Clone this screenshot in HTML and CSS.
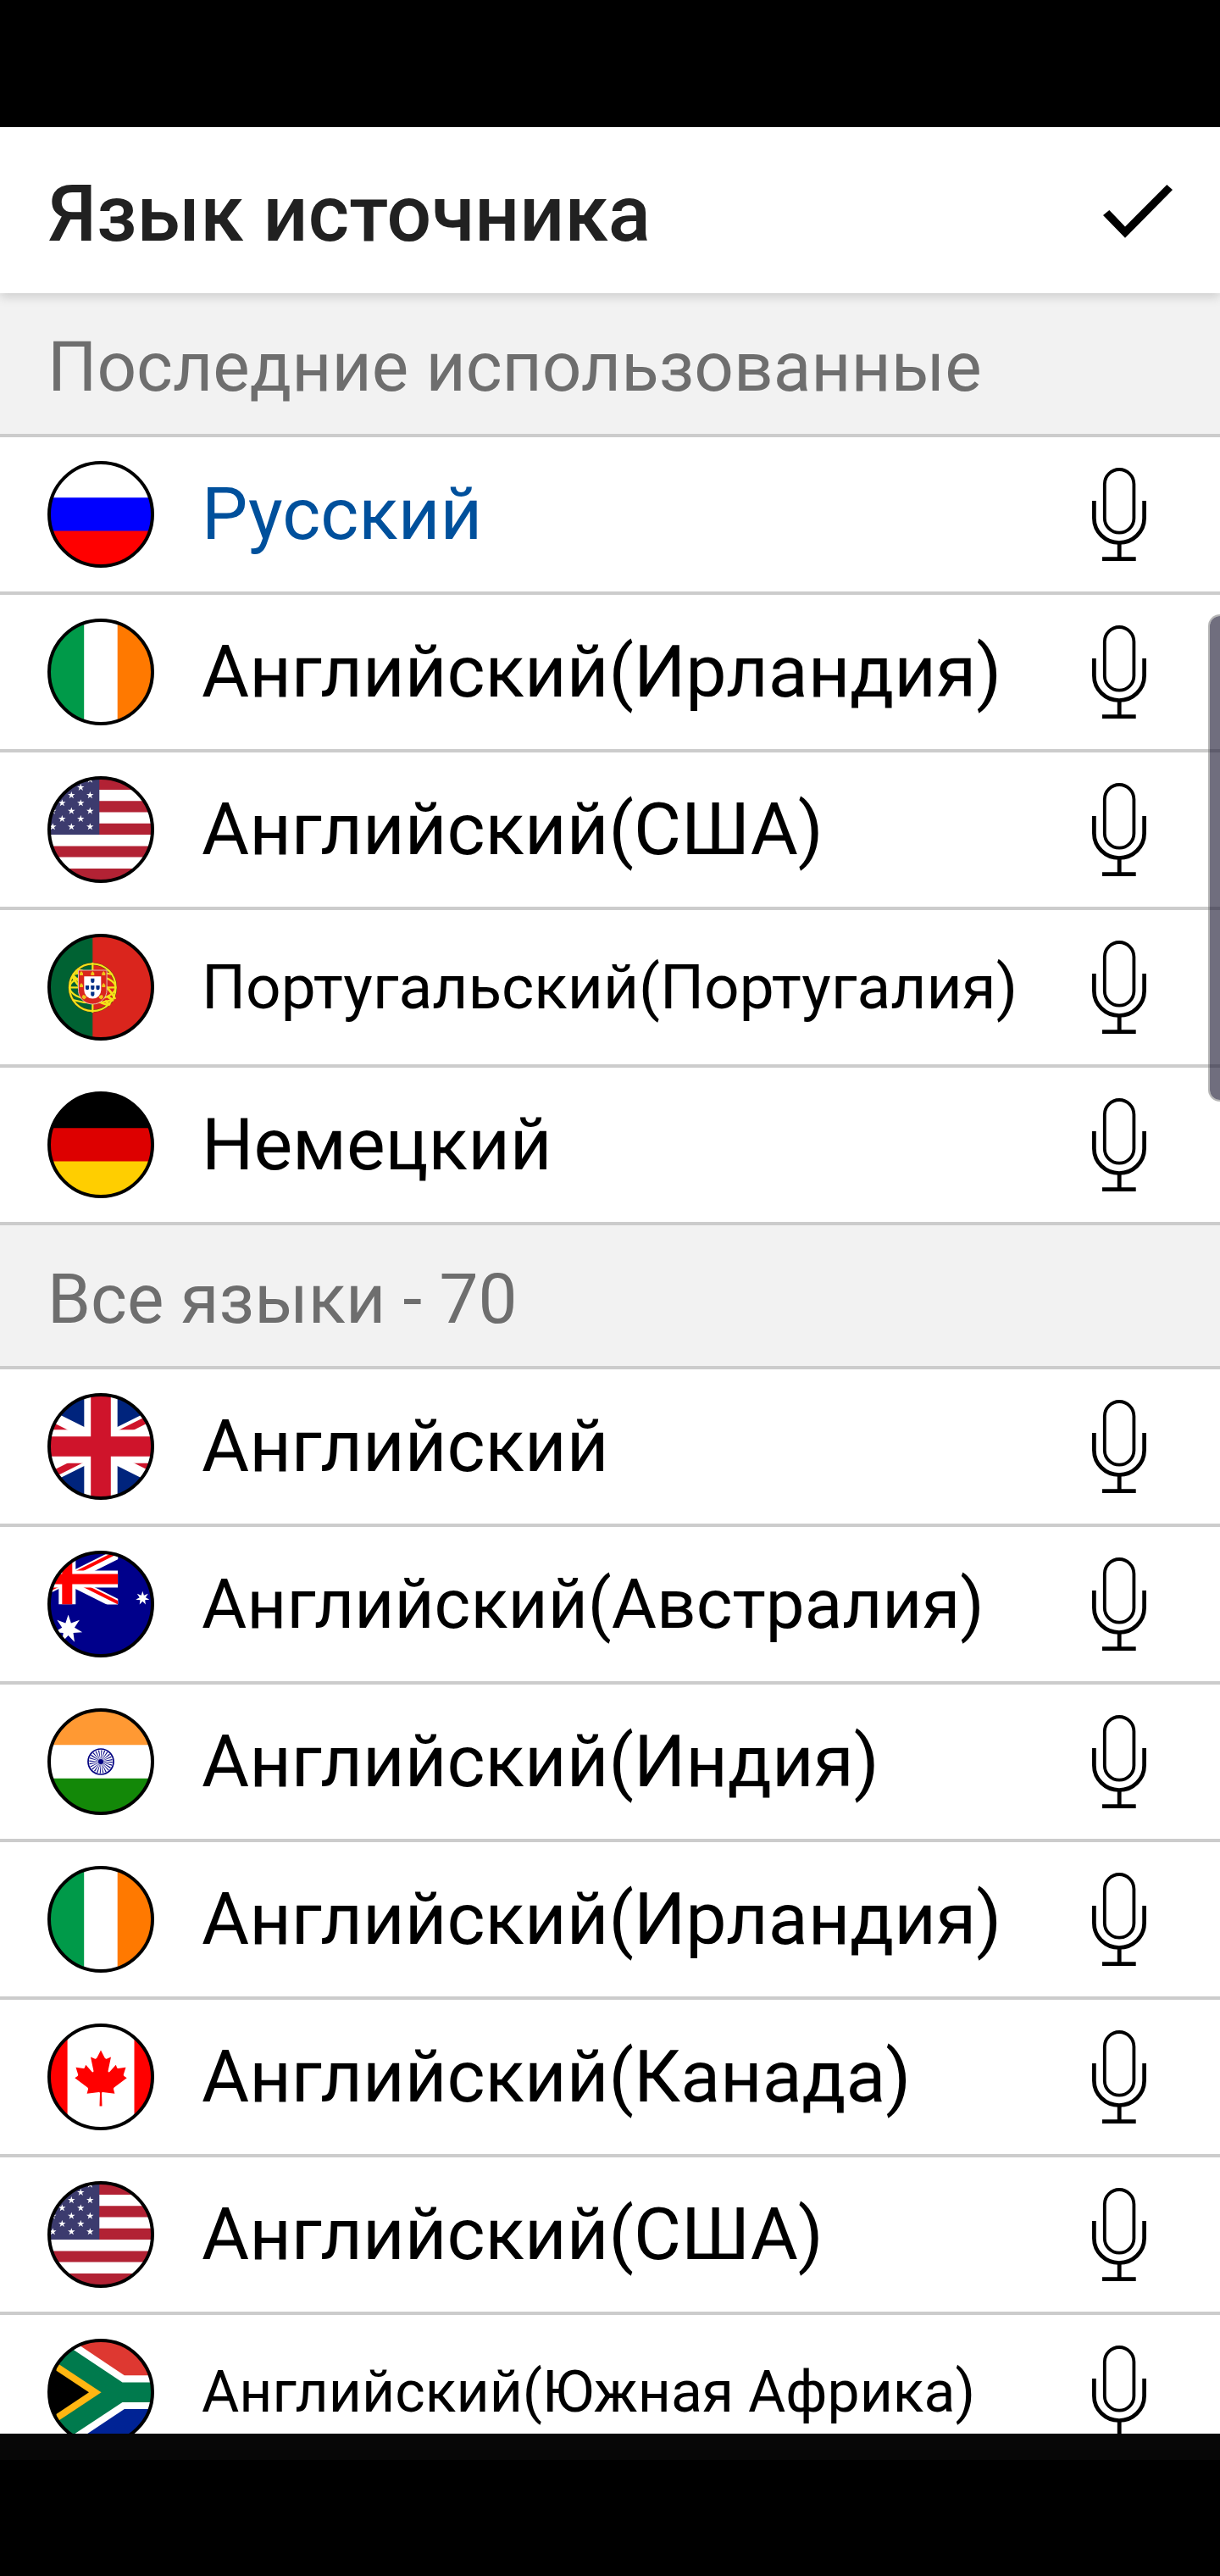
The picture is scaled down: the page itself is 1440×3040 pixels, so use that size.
FILE: index.html
```html
<!DOCTYPE html>
<html lang="ru">
<head>
<meta charset="utf-8">
<title>Язык источника</title>
<link rel="stylesheet" href="styles.css">
</head>
<body>
<svg class="defs" aria-hidden="true">
  <defs>
    <clipPath id="disc"><circle cx="63" cy="63" r="61.5"/></clipPath>
    <clipPath id="union-area"><path d="M0 0h60v30H0z"/></clipPath>
    <clipPath id="union-pinwheel"><path d="M30 15h30v15zv15H0zH0V0zV0h30z"/></clipPath>
    <clipPath id="canton"><path d="M0 0h61.3v69H0z"/></clipPath>

    <symbol id="mic" viewBox="0 0 64 110">
      <g fill="none" stroke="#000">
        <rect x="14.8" y="2" width="34.6" height="74.7" rx="17.3" stroke-width="3.8"/>
        <path d="M2.4 39v20.500a29.600 29 0 0 0 59.200 0V39" stroke-width="4.700"/>
        <path d="M32.200 88v18" stroke-width="4.800"/>
        <path d="M12 107.600h39.700" stroke-width="4.800"/>
      </g>
    </symbol>

    <symbol id="ring" viewBox="0 0 126 126">
      <circle cx="63" cy="63" r="61" fill="none" stroke="#000" stroke-width="4"/>
    </symbol>

    <symbol id="star" viewBox="-10 -10 20 20">
      <path fill="#fff" d="M0-10 2.250-3.090 9.510-3.090 3.630 1.180 5.880 8.090 0 3.820-5.880 8.090-3.630 1.180-9.510-3.090-2.250-3.090z"/>
    </symbol>
    <symbol id="star7" viewBox="-10 -10 20 20">
      <path fill="#fff" d="M0-10 1.930-4 7.820-6.230 4.330-.99 9.750 2.220 3.470 2.770 4.340 9.010 0 4.440-4.340 9.010-3.470 2.770-9.750 2.220-4.330-.99-7.820-6.230-1.930-4z"/>
    </symbol>

    <symbol id="ru" viewBox="0 0 126 126">
      <g clip-path="url(#disc)"><path fill="#fff" d="M0 0h126v44H0z"/><path fill="#00f" d="M0 43.300h126v40H0z"/><path fill="#f00" d="M0 82.500h126V126H0z"/></g>
    </symbol>
    <symbol id="ie" viewBox="0 0 126 126">
      <g clip-path="url(#disc)"><path fill="#fff" d="M0 0h126v126H0z"/><path fill="#009a49" d="M0 0h43.200v126H0z"/><path fill="#ff7900" d="M82.700 0H126v126H82.700z"/></g>
    </symbol>
    <symbol id="de" viewBox="0 0 126 126">
      <g clip-path="url(#disc)"><path d="M0 0h126v44H0z"/><path fill="#d00" d="M0 43.300h126v40H0z"/><path fill="#ffce00" d="M0 82.500h126V126H0z"/></g>
    </symbol>
    <symbol id="us" viewBox="0 0 126 126">
      <g clip-path="url(#disc)">
        <path fill="#fff" d="M0 0h126v126H0z"/>
        <path fill="#b22234" d="M0 2h126v14H0zM0 29.300h126v13.200H0zM0 55.800h126V69H0zM0 82.400h126v13.200H0zM0 109h126v14H0z"/>
        <path fill="#3c3b6e" d="M0 0h61.300v69H0z"/>
        <g clip-path="url(#canton)">
          <use href="#star" x="45.800" y="-.5" width="9" height="9"/>
          <use href="#star" x="34.800" y="8.800" width="9" height="9"/>
          <use href="#star" x="23.800" y="18" width="9" height="9"/><use href="#star" x="45.800" y="18" width="9" height="9"/>
          <use href="#star" x="12.800" y="27.200" width="9" height="9"/><use href="#star" x="34.800" y="27.200" width="9" height="9"/>
          <use href="#star" x="1.800" y="36.600" width="9" height="9"/><use href="#star" x="23.800" y="36.600" width="9" height="9"/><use href="#star" x="45.800" y="36.600" width="9" height="9"/>
          <use href="#star" x="12.800" y="45.900" width="9" height="9"/><use href="#star" x="34.800" y="45.900" width="9" height="9"/>
          <use href="#star" x="1.800" y="55.200" width="9" height="9"/><use href="#star" x="23.800" y="55.200" width="9" height="9"/><use href="#star" x="45.800" y="55.200" width="9" height="9"/>
        </g>
      </g>
    </symbol>
    <symbol id="pt" viewBox="0 0 126 126">
      <g clip-path="url(#disc)">
        <path fill="#da251d" d="M0 0h126v126H0z"/><path fill="#006233" d="M0 0h53.300v126H0z"/>
        <ellipse cx="53.300" cy="63.300" rx="27.300" ry="27.800" fill="none" stroke="#5b4a10" stroke-width="3.200"/>
        <g fill="none" stroke="#f5e21a" stroke-width="2.200">
          <ellipse cx="53.300" cy="63.300" rx="27.300" ry="27.800"/>
          <path d="M53.300 34v59M26 63.300h55M30 48q23-6 47 0M30 78q23 7 47 0"/>
          <path d="M29 50c8 14 26 30 42 34M35 42c14 2 38 20 45 35" stroke-width="2.600"/>
          <path d="M30 49l8 8M34 44l8 8M68 79l6 5M71 74l7 5" stroke-width="3"/>
          <ellipse cx="53.300" cy="63.300" rx="27" ry="14"/>
        </g>
        <path fill="#da251d" stroke="#e3b9b4" stroke-width="1" d="M36.500 43h33.600v23.500a16.800 16.500 0 0 1-33.600 0z"/>
        <path fill="#fff" d="M43.300 50.300h20v16.300a10 10 0 0 1-20 0z"/>
        <path fill="#003087" d="M51.200 52.700h4.200v3.200a2.100 2 0 0 1-4.200 0zM44.900 61h4.200v3.200a2.100 2 0 0 1-4.200 0zM51.200 61h4.200v3.200a2.100 2 0 0 1-4.200 0zM57.400 61h4.200v3.200a2.100 2 0 0 1-4.200 0zM51.200 68.600h4.200v3.200a2.100 2 0 0 1-4.200 0z"/>
        <path fill="#f0c419" d="M38 49v-2.500l2-2.500 2 2.500V49zM51.300 49v-2.500l2-2.500 2 2.500V49zM64.300 49v-2.500l2-2.500 2 2.500V49zM38 63v-2.500l2-2.500 2 2.500V63zM64.300 63v-2.500l2-2.500 2 2.500V63zM43 77.500l-2.500-2.500 1.500-3 3 1 1 2.500zM63.600 77.500l2.500-2.500-1.500-3-3 1-1 2.500z"/>
      </g>
    </symbol>
    <symbol id="union" viewBox="0 0 60 30">
      <g clip-path="url(#union-area)">
        <path stroke="#fff" stroke-width="6" d="M0 0l60 30M60 0L0 30"/>
        <path clip-path="url(#union-pinwheel)" stroke="currentColor" stroke-width="4" d="M0 0l60 30M60 0L0 30"/>
        <path stroke="#fff" stroke-width="10" d="M30 0v30M0 15h60"/>
        <path stroke="currentColor" stroke-width="6" d="M30 0v30M0 15h60"/>
      </g>
    </symbol>
    <symbol id="gb" viewBox="0 0 126 126">
      <g clip-path="url(#disc)"><path fill="#00247d" d="M0 0h126v126H0z"/><use href="#union" x="-55" y="4" width="236" height="118" color="#cf142b"/></g>
    </symbol>
    <symbol id="au" viewBox="0 0 126 126">
      <g clip-path="url(#disc)"><path fill="#00008b" d="M0 0h126v126H0z"/>
        <use href="#union" x="-36.700" y="3.500" width="120" height="60" color="#f00"/>
        <use href="#star7" x="7.600" y="75.400" width="34" height="34"/>
        <use href="#star7" x="104" y="47.700" width="16.600" height="16.600"/>
      </g>
    </symbol>
    <symbol id="in" viewBox="0 0 126 126">
      <g clip-path="url(#disc)"><path fill="#fff" d="M0 0h126v126H0z"/><path fill="#f93" d="M0 0h126v43.300H0z"/><path fill="#138808" d="M0 82.800h126V126H0z"/></g>
      <g fill="none" stroke="#000080">
        <circle cx="63" cy="63" r="15" stroke-width="1.700"/>
        <circle cx="63" cy="63" r="7.200" stroke-width="13" stroke-dasharray=".65 1.235"/>
      </g>
      <circle cx="63" cy="63" r="3" fill="#000080"/>
    </symbol>
    <symbol id="ca" viewBox="0 0 126 126">
      <g clip-path="url(#disc)"><path fill="#fff" d="M0 0h126v126H0z"/><path fill="#f00" d="M0 0h23.600v126H0zM102.500 0H126v126h-23.500z"/></g>
      <path fill="#f00" d="M63 31.400l-4.600 9.200q-1 1.700-2.800.9L51 39.600l3.400 16.200q.3 2.600-1.800 1.200L45.200 48.800l-1.200 3.300q-.4 1-1.500.9l-9-1.300 2.600 8.300q.5 1.300-.5 1.900l-3.300 2.300 15 11.300q1 .9.700 2l-1.400 5.200 14.200-1.700q1.200 0 1.200 1.300l-.5 15.300h3l-.5-15.300q0-1.300 1.200-1.300l14.200 1.700-1.400-5.200q-.3-1.100.7-2l15-11.300-3.300-2.300q-1-.6-.5-1.900l2.600-8.300-9 1.300q-1.100.1-1.500-.9l-1.200-3.300-7.400 8.200q-2.100 1.400-1.800-1.200L75 39.600l-4.600 1.900q-1.800.8-2.800-.9z"/>
    </symbol>
    <symbol id="za" viewBox="0 0 126 126">
      <g clip-path="url(#disc)">
        <path fill="#007a4d" d="M0 0h126v126H0z"/>
        <path fill="#fff" d="M126 51.500H88.500L11.200 0H126zM126 75H88.500L11.200 126H126z"/>
        <path fill="#de3831" d="M126 43.300H90.800L26.200 0H126z"/>
        <path fill="#002395" d="M126 83H90.800L26.200 126H126z"/>
        <path fill="#ffb612" d="M0 21.200l63.600 42.100L0 105.400z"/>
        <path d="M0 4h7.500v26H10.500v66H0zM0 30.700l49 32.600L0 96z"/>
      </g>
    </symbol>
  </defs>
</svg>

<div class="status-bar"></div>
<div class="app">
  <header class="header">
    <h1 class="title">Язык источника</h1>
    <svg class="check" viewBox="0 0 84 64"><path d="M9.300 29.900 2 36l26 26.800L84 6.100 77.300 0 28 49.400z"/></svg>
  </header>
  <main class="list">
    <h2 class="section">Последние использованные</h2>
    <div class="row selected"><svg class="flag"><use href="#ru"/><use href="#ring"/></svg><span class="name">Русский</span><svg class="mic"><use href="#mic"/></svg></div>
    <div class="row"><svg class="flag"><use href="#ie"/><use href="#ring"/></svg><span class="name">Английский(Ирландия)</span><svg class="mic"><use href="#mic"/></svg></div>
    <div class="row"><svg class="flag"><use href="#us"/><use href="#ring"/></svg><span class="name">Английский(США)</span><svg class="mic"><use href="#mic"/></svg></div>
    <div class="row"><svg class="flag"><use href="#pt"/><use href="#ring"/></svg><span class="name name-small">Португальский(Португалия)</span><svg class="mic"><use href="#mic"/></svg></div>
    <div class="row"><svg class="flag"><use href="#de"/><use href="#ring"/></svg><span class="name">Немецкий</span><svg class="mic"><use href="#mic"/></svg></div>
    <h2 class="section">Все языки - 70</h2>
    <div class="row"><svg class="flag"><use href="#gb"/><use href="#ring"/></svg><span class="name">Английский</span><svg class="mic"><use href="#mic"/></svg></div>
    <div class="row"><svg class="flag"><use href="#au"/><use href="#ring"/></svg><span class="name name-medium">Английский(Австралия)</span><svg class="mic"><use href="#mic"/></svg></div>
    <div class="row"><svg class="flag"><use href="#in"/><use href="#ring"/></svg><span class="name">Английский(Индия)</span><svg class="mic"><use href="#mic"/></svg></div>
    <div class="row"><svg class="flag"><use href="#ie"/><use href="#ring"/></svg><span class="name">Английский(Ирландия)</span><svg class="mic"><use href="#mic"/></svg></div>
    <div class="row"><svg class="flag"><use href="#ca"/><use href="#ring"/></svg><span class="name">Английский(Канада)</span><svg class="mic"><use href="#mic"/></svg></div>
    <div class="row"><svg class="flag"><use href="#us"/><use href="#ring"/></svg><span class="name">Английский(США)</span><svg class="mic"><use href="#mic"/></svg></div>
    <div class="row"><svg class="flag"><use href="#za"/><use href="#ring"/></svg><span class="name name-tiny">Английский(Южная Африка)</span><svg class="mic"><use href="#mic"/></svg></div>
  </main>
  <div class="edge-handle"></div>
</div>
<div class="nav-strip"></div>
</body>
</html>
```
FILE: styles.css
```css
* {
  box-sizing: border-box;
}

body {
  margin: 0;
  width: 1440px;
  height: 3040px;
  overflow: hidden;
  background: #000;
  color: #000;
  font-family: Roboto, sans-serif;
}

.defs {
  display: block;
  width: 0;
  height: 0;
}

.status-bar {
  height: 150px;
}

.app {
  position: relative;
  display: flex;
  flex-direction: column;
  height: 2722px;
  overflow: hidden;
  background: #fff;
}

.header {
  position: relative;
  z-index: 1;
  display: flex;
  flex: none;
  align-items: center;
  justify-content: space-between;
  height: 196px;
  padding: 0 56px 0 57px;
  background: #fff;
  box-shadow: 0 4px 12px rgba(0, 0, 0, 0.16);
}

.title {
  margin: 0;
  padding-top: 10px;
  color: #212121;
  font-size: 92.9px;
  font-weight: 500;
  line-height: 1.2;
  white-space: nowrap;
}

.check {
  width: 84px;
  height: 64px;
  margin-top: 4px;
}

.section {
  display: flex;
  align-items: center;
  height: 170px;
  margin: 0;
  padding: 8px 56px 0;
  border-bottom: 4px solid #ccc;
  background: #f2f2f2;
  color: #6e6e6e;
  font-size: 81.9px;
  font-weight: 400;
  white-space: nowrap;
}

.row {
  display: flex;
  align-items: center;
  height: 186px;
  padding: 0 87px 0 56px;
  border-bottom: 4px solid #ccc;
}

.flag {
  flex: none;
  width: 126px;
  height: 126px;
}

.name {
  flex: 1;
  margin-left: 56px;
  font-size: 86.1px;
  line-height: 1.2;
  white-space: nowrap;
}

.name-medium {
  font-size: 81.7px;
}

.name-small {
  padding-top: 1px;
  font-size: 73px;
}

.name-tiny {
  padding-top: 2px;
  font-size: 67.9px;
}

.selected .name {
  color: #00509c;
}

.mic {
  flex: none;
  width: 64px;
  height: 110px;
}

.edge-handle {
  position: absolute;
  top: 575px;
  right: 0;
  width: 14px;
  height: 575px;
  border: 2px solid rgba(110, 110, 110, 0.5);
  border-right: 0;
  border-radius: 14px 0 0 14px;
  background: rgba(36, 32, 57, 0.65);
  background-clip: padding-box;
}

.nav-strip {
  height: 31px;
  background: #070707;
}
```
